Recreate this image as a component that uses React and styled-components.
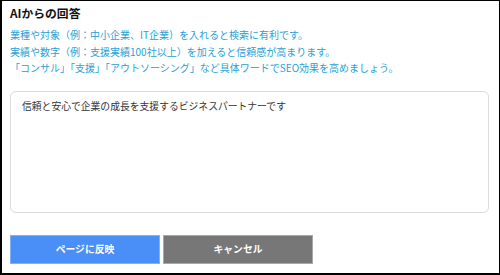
import React from 'react';
import styled, { createGlobalStyle } from 'styled-components';

const GlobalStyle = createGlobalStyle`
  html, body {
    margin: 0;
    padding: 0;
    background: #fff;
  }
  body {
    font-family: Meiryo, "Noto Sans CJK JP", "Noto Sans", sans-serif;
  }
`;

const hints = [
  '業種や対象（例：中小企業、IT企業）を入れると検索に有利です。',
  '実績や数字（例：支援実績100社以上）を加えると信頼感が高まります。',
  '「コンサル」「支援」「アウトソーシング」など具体ワードでSEO効果を高めましょう。',
];

const App = () => {
  return (
    <>
      <GlobalStyle />
      <Panel>
        <Title>AIからの回答</Title>
        <Hints>
          {hints.map(h => (
            <Hint key={h}>{h}</Hint>
          ))}
        </Hints>
        <Answer
          readOnly
          value='信頼と安心で企業の成長を支援するビジネスパートナーです'
        />
        <Actions>
          <ActionButton primary>ページに反映</ActionButton>
          <ActionButton>キャンセル</ActionButton>
        </Actions>
      </Panel>
    </>
  );
};

export default App;

const Panel = styled.div`
  box-sizing: border-box;
  width: 500px;
  height: 275px;
  border-style: solid;
  border-color: #000;
  border-width: 1px 1px 2px 2px;
  padding: 4px 10px 0 8px;
  display: flex;
  flex-direction: column;
`;

const Title = styled.h2`
  margin: 0;
  font-size: 11.8px;
  line-height: 16px;
  font-weight: bold;
  color: #111;
`;

const Hints = styled.div`
  margin-top: 6px;
`;

const Hint = styled.p`
  margin: 0;
  font-size: 10px;
  line-height: 16.5px;
  color: #2a9fd6;
  white-space: nowrap;
`;

const Answer = styled.textarea`
  box-sizing: border-box;
  margin-top: 14px;
  width: 100%;
  height: 122px;
  padding: 7px 11px;
  border: 1px solid #dcdcdc;
  border-radius: 6px;
  resize: none;
  outline: none;
  font-family: inherit;
  font-size: 9.8px;
  line-height: 14px;
  color: #333;
  background: #fff;
`;

const Actions = styled.div`
  display: flex;
  gap: 3px;
  margin-top: 22px;
`;

const ActionButton = styled.button`
  box-sizing: border-box;
  width: 150px;
  height: 29px;
  border: 1px solid ${p => (p.primary ? '#7fb0fa' : '#a8a8a8')};
  background: ${p => (p.primary ? '#4a8ff8' : '#777777')};
  color: #fff;
  font-family: inherit;
  font-size: 9.8px;
  font-weight: bold;
  cursor: pointer;
  padding: 0;
`;
